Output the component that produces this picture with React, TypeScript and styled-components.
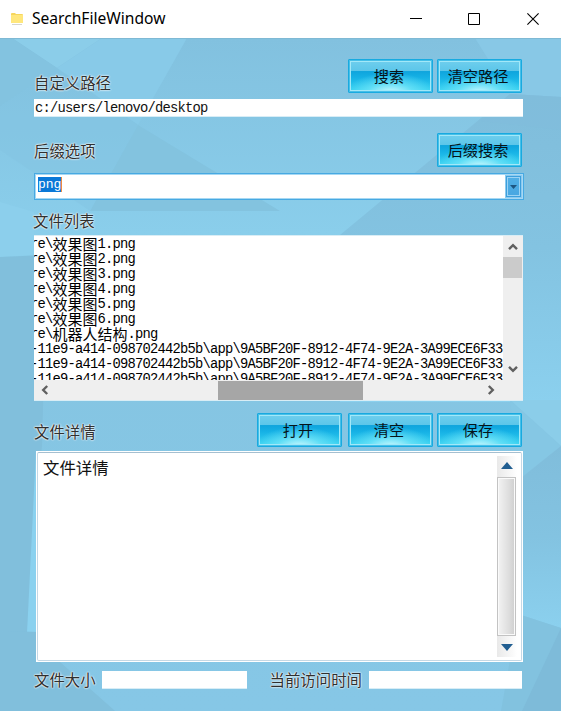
import React from "react";
import styled, { createGlobalStyle } from "styled-components";

const GlobalStyle = createGlobalStyle`
  * { box-sizing: border-box; }
  body { margin: 0; background: #86c5e2; overflow: hidden; }
`;

const sans = `"Noto Sans CJK SC", "Noto Sans", sans-serif`;
const mono = `"Liberation Mono", "Noto Sans CJK SC", monospace`;

const Window = styled.main`
  width: 561px;
  height: 711px;
  display: flex;
  flex-direction: column;
  overflow: hidden;
  font-family: ${sans};
  color: #111;
`;

const TitleBar = styled.header`
  height: 38px;
  flex: none;
  display: flex;
  align-items: center;
  padding-left: 10px;
  background: #fff;
`;

const Title = styled.h1`
  flex: 1;
  margin: 0 0 0 8px;
  font: 400 15.6px/36px "Noto Sans", sans-serif;
  height: 38px;
  color: #000;
`;

const WindowButton = styled.button`
  width: 58.5px;
  height: 38px;
  padding: 0 0 0 2px;
  border: 0;
  background: none;
  display: flex;
  align-items: center;
  justify-content: center;
`;

const Client = styled.section`
  position: relative;
  flex: 1;
  display: flex;
  flex-direction: column;
  padding: 21px 37px 0 34px;
`;

const Backdrop = styled.svg`
  position: absolute;
  inset: 0;
  z-index: -1;
`;

const Row = styled.div<{ $top?: number; $right?: number }>`
  display: flex;
  height: 34px;
  flex: none;
  margin-top: ${(p) => p.$top ?? 0}px;
  margin-right: ${(p) => p.$right ?? 2}px;
`;

const Label = styled.span<{ $top?: number; $left?: number; $grow?: boolean }>`
  flex: ${(p) => (p.$grow ? "1" : "none")};
  margin: ${(p) => p.$top ?? 0}px 0 0 ${(p) => p.$left ?? 0}px;
  font-size: 15.4px;
  line-height: 16px;
  height: 18px;
  white-space: nowrap;
  color: #2e3030;
  text-shadow: 0 0 2px #fff, 0 0 2px #f2f2f2, 0 0 1px #e8e8e8;
`;

const GlossButton = styled.button<{ $gap?: number }>`
  width: 85px;
  height: 34px;
  flex: none;
  margin: 0 0 0 ${(p) => p.$gap ?? 4}px;
  padding: 0 3px 2px 0;
  border: 1px solid #18aae0;
  border-radius: 1px;
  box-shadow: inset 0 0 0 1px #46bfe8, inset 0 0 0 2px #a2e8f8;
  background:
    radial-gradient(ellipse 54% 62% at 50% 102%, rgba(210, 250, 255, 0.95), rgba(120, 232, 250, 0.65) 50%, rgba(60, 210, 242, 0) 100%),
    linear-gradient(#70cfee 0, #5cc6e9 34%, #0fa5dd 36%, #16b1e5 55%, #39d5f2 100%);
  font: 15.2px/30px ${sans};
  color: #06141a;
`;

const Field = styled.div<{ $width?: number; $left?: number }>`
  width: ${(p) => (p.$width ? `${p.$width}px` : "auto")};
  height: 18px;
  flex: none;
  margin-left: ${(p) => p.$left ?? 0}px;
  background: #fff;
  border-bottom: 1px solid #d8edf6;
  font: 13.8px/19px ${mono};
  letter-spacing: -0.78px;
  white-space: nowrap;
`;

const PathField = styled(Field)`
  margin: 6px 1px 0 0;
  padding-left: 1px;
`;

const Combo = styled.div`
  display: flex;
  justify-content: space-between;
  height: 27px;
  flex: none;
  margin-top: 6px;
  padding: 1px 1px 1px 3px;
  border: 1px solid #47a9e2;
  background: #fff;
  box-shadow: inset 0 0 0 1px #a6d8f3;
`;

const Selection = styled.span`
  height: 15px;
  margin-top: 2px;
  border-right: 1px solid #ed8b3f;
  background: #0a78d7;
  color: #fff;
  font: 13px/16px ${mono};
  letter-spacing: -0.1px;
`;

const ComboArrow = styled.button`
  width: 17px;
  height: 23px;
  padding: 0;
  border: 1px solid #8acaf0;
  box-shadow: inset 0 0 0 1px #3d9fdc, inset 0 0 0 2px #9bd3f4;
  background: linear-gradient(#50b0e6, #48a6e1);
  display: grid;
  place-items: center;
`;

const ListBox = styled.div`
  display: grid;
  grid-template: 144px 22px / 1fr 20px;
  height: 166px;
  flex: none;
  margin: 5px 1px 0 0;
  background: #efefef;
  border-top: 1px solid #d9edf5;
  border-bottom: 1px solid #d9edf5;
`;

const Files = styled.ul`
  margin: 0;
  padding: 0;
  overflow: hidden;
  background: #fff;
  list-style: none;
`;

const FileItem = styled.li`
  display: flex;
  height: 15px;
  margin-left: -4px;
  font: 13.8px/17px ${mono};
  letter-spacing: -0.78px;
  white-space: pre;
  color: #000;
`;

const Han = styled.span`
  font: 15px/15px ${sans};
  letter-spacing: 0;
`;

const VBar = styled.div`
  display: flex;
  flex-direction: column;
  align-items: center;
  padding: 6px 1px 0 0;
`;

const VThumb = styled.div`
  width: 19px;
  height: 21px;
  margin: 5px 0 86px;
  background: #cbcbcb;
`;

const HBar = styled.div`
  display: flex;
  align-items: center;
  padding: 0 7px 2px 6px;
`;

const HThumb = styled.div`
  width: 145px;
  height: 19px;
  margin: 0 auto 0 168px;
  background: #a6a6a6;
`;

const DetailFrame = styled.div`
  height: 211px;
  flex: none;
  margin: 4px 1px 0 2px;
  padding: 1px;
  background: #fff;
`;

const DetailBox = styled.div`
  display: flex;
  justify-content: space-between;
  height: 209px;
  padding: 3px 4px 3px 5px;
  border: 1px solid #c5d8e5;
  border-top-color: #a5bfd0;
  border-radius: 2px;
  font-size: 16.4px;
  line-height: 22px;
`;

const DetailBar = styled.div`
  display: flex;
  flex-direction: column;
  align-items: center;
  justify-content: space-between;
  width: 20px;
  padding: 6px 1px 6px 0;
  background: linear-gradient(90deg, #e9e9e9, #f8f8f8 70%, #fff);
`;

const DetailThumb = styled.div`
  width: 19px;
  height: 159px;
  border: 1px solid #c3c3c3;
  box-shadow: inset 0 0 0 1px #fafafa;
  background: linear-gradient(90deg, #f3f3f3, #dddddd 65%, #cfcfcf);
`;

type Direction = "up" | "down" | "left" | "right";
const angles: Record<Direction, number> = { up: 0, right: 90, down: 180, left: 270 };

const Chevron = ({ to }: { to: Direction }) => (
  <svg width="10" height="10" viewBox="0 0 10 10">
    <path d="M1 7.2 5 3.2l4 4" fill="none" stroke="#606060" strokeWidth="2.4" transform={`rotate(${angles[to]} 5 5)`} />
  </svg>
);

const Triangle = ({ to }: { to: Direction }) => (
  <svg width="12" height="7" viewBox="0 0 12 7">
    <path d="M0 7 6 0l6 7z" fill="#215e91" transform={`rotate(${angles[to]} 6 3.5)`} />
  </svg>
);

const BackgroundArt = () => (
  <Backdrop width="561" height="673" viewBox="0 38 561 673">
    <defs>
      <linearGradient id="base" x1="0" y1="0" x2="0" y2="1">
        <stop offset="0" stopColor="#82c1df" />
        <stop offset="0.29" stopColor="#8aceeb" />
        <stop offset="0.4" stopColor="#85c5e2" />
        <stop offset="1" stopColor="#86c7e6" />
      </linearGradient>
      <linearGradient id="side" x1="0" y1="0" x2="0" y2="1">
        <stop offset="0" stopColor="#80bddb" />
        <stop offset="0.5" stopColor="#83c3e1" />
        <stop offset="1" stopColor="#8bd0ee" />
      </linearGradient>
    </defs>
    <path fill="url(#base)" d="M0 38h561v673H0z" />
    <path fill="#8bcde9" d="M12 38h90L57 68z" />
    <path fill="#83c3e0" d="M0 38h12l45 30L0 106z" />
    <path fill="#88cae8" d="M102 38h85l-49 87L57 68z" />
    <path fill="#83c3e0" d="M57 68 138 125 90 211 0 150v-44z" opacity=".4" />
    <path fill="#83c3df" d="M138 125 90 211h190z" />
    <path fill="#88c8e6" d="M475 38h86v59l-51-3z" />
    <path fill="url(#side)" d="m510 94 51 3v305H340V235z" />
    <path fill="#80bddb" d="m510 94 51 3v33l-80-9z" opacity=".45" />
    <path fill="#8ccfec" d="M0 202 34 212v43l-34 2z" />
    <path fill="#81bfdc" d="M0 257l47-2-5 190-15 189-27-3z" />
    <path fill="#8ad1ef" d="m36 450-9 184 15-2z" />
    <path fill="#81bfdc" d="m0 631 42 1 18 30 55 49H0z" />
    <path fill="#8bcde9" d="M510 400h51v46z" />
    <path fill="#85c7e4" d="m510 400 51 46-40 32z" />
    <path fill="url(#side)" d="m561 446-40 32v137l40 13z" />
    <path fill="#82c2df" d="m518 614 43 14v83h-60z" />
    <path fill="#7ebbd9" d="m561 628-39 83h39z" />
    <path fill="#7fb9d4" d="M0 38h561v1H0z" />
  </Backdrop>
);

const pictures = ["1", "2", "3", "4", "5", "6"];
const appPath = "-11e9-a414-098702442b5b\\app\\9A5BF20F-8912-4F74-9E2A-3A99ECE6F33";

export default function App() {
  return (
    <Window>
      <GlobalStyle />
      <TitleBar>
        <svg width="14" height="14" viewBox="0 0 14 14">
          <path fill="#f6d65d" d="M1 2q0-1 1-1h3l1 1h6q1 0 1 1v7H1z" />
          <path fill="#ffe77d" d="M1 3h12v8H1z" />
          <path fill="#d5d5cf" d="M2 12h10v1H2z" />
        </svg>
        <Title>SearchFileWindow</Title>
        <WindowButton aria-label="minimize">
          <svg width="12" height="12"><path d="M0 5.5h12" stroke="#000" /></svg>
        </WindowButton>
        <WindowButton aria-label="maximize">
          <svg width="12" height="12"><path d="M.5.5h11v11H.5z" fill="none" stroke="#000" /></svg>
        </WindowButton>
        <WindowButton aria-label="close">
          <svg width="12" height="12"><path d="m.4.4 11.2 11.2M11.6.4.4 11.6" stroke="#000" strokeWidth="1.1" /></svg>
        </WindowButton>
      </TitleBar>
      <Client>
        <BackgroundArt />
        <Row>
          <Label $grow $top={15}>自定义路径</Label>
          <GlossButton>搜索</GlossButton>
          <GlossButton>清空路径</GlossButton>
        </Row>
        <PathField>c:/users/lenovo/desktop</PathField>
        <Row $top={16}>
          <Label $grow $top={9}>后缀选项</Label>
          <GlossButton>后缀搜索</GlossButton>
        </Row>
        <Combo>
          <Selection>png</Selection>
          <ComboArrow aria-label="expand">
            <svg width="7" height="4"><path d="M0 0h7L3.5 4z" fill="#1d5681" /></svg>
          </ComboArrow>
        </Combo>
        <Label $top={12} $left={-1}>文件列表</Label>
        <ListBox>
          <Files>
            {pictures.map((n) => (
              <FileItem key={n}>re\<Han>效果图</Han>{n}.png</FileItem>
            ))}
            <FileItem>re\<Han>机器人结构</Han>.png</FileItem>
            {[0, 1, 2].map((n) => (
              <FileItem key={n}>{appPath}</FileItem>
            ))}
          </Files>
          <VBar>
            <Chevron to="up" />
            <VThumb />
            <Chevron to="down" />
          </VBar>
          <HBar>
            <Chevron to="left" />
            <HThumb />
            <Chevron to="right" />
          </HBar>
        </ListBox>
        <Row $top={12}>
          <Label $grow $top={10}>文件详情</Label>
          <GlossButton>打开</GlossButton>
          <GlossButton $gap={6}>清空</GlossButton>
          <GlossButton>保存</GlossButton>
        </Row>
        <DetailFrame>
          <DetailBox>
            文件详情
            <DetailBar>
              <Triangle to="up" />
              <DetailThumb />
              <Triangle to="down" />
            </DetailBar>
          </DetailBox>
        </DetailFrame>
        <Row $top={9} $right={0}>
          <Label>文件大小</Label>
          <Field $width={145} $left={6} />
          <Label $left={23}>当前访问时间</Label>
          <Field $width={153} $left={7} />
        </Row>
      </Client>
    </Window>
  );
}
